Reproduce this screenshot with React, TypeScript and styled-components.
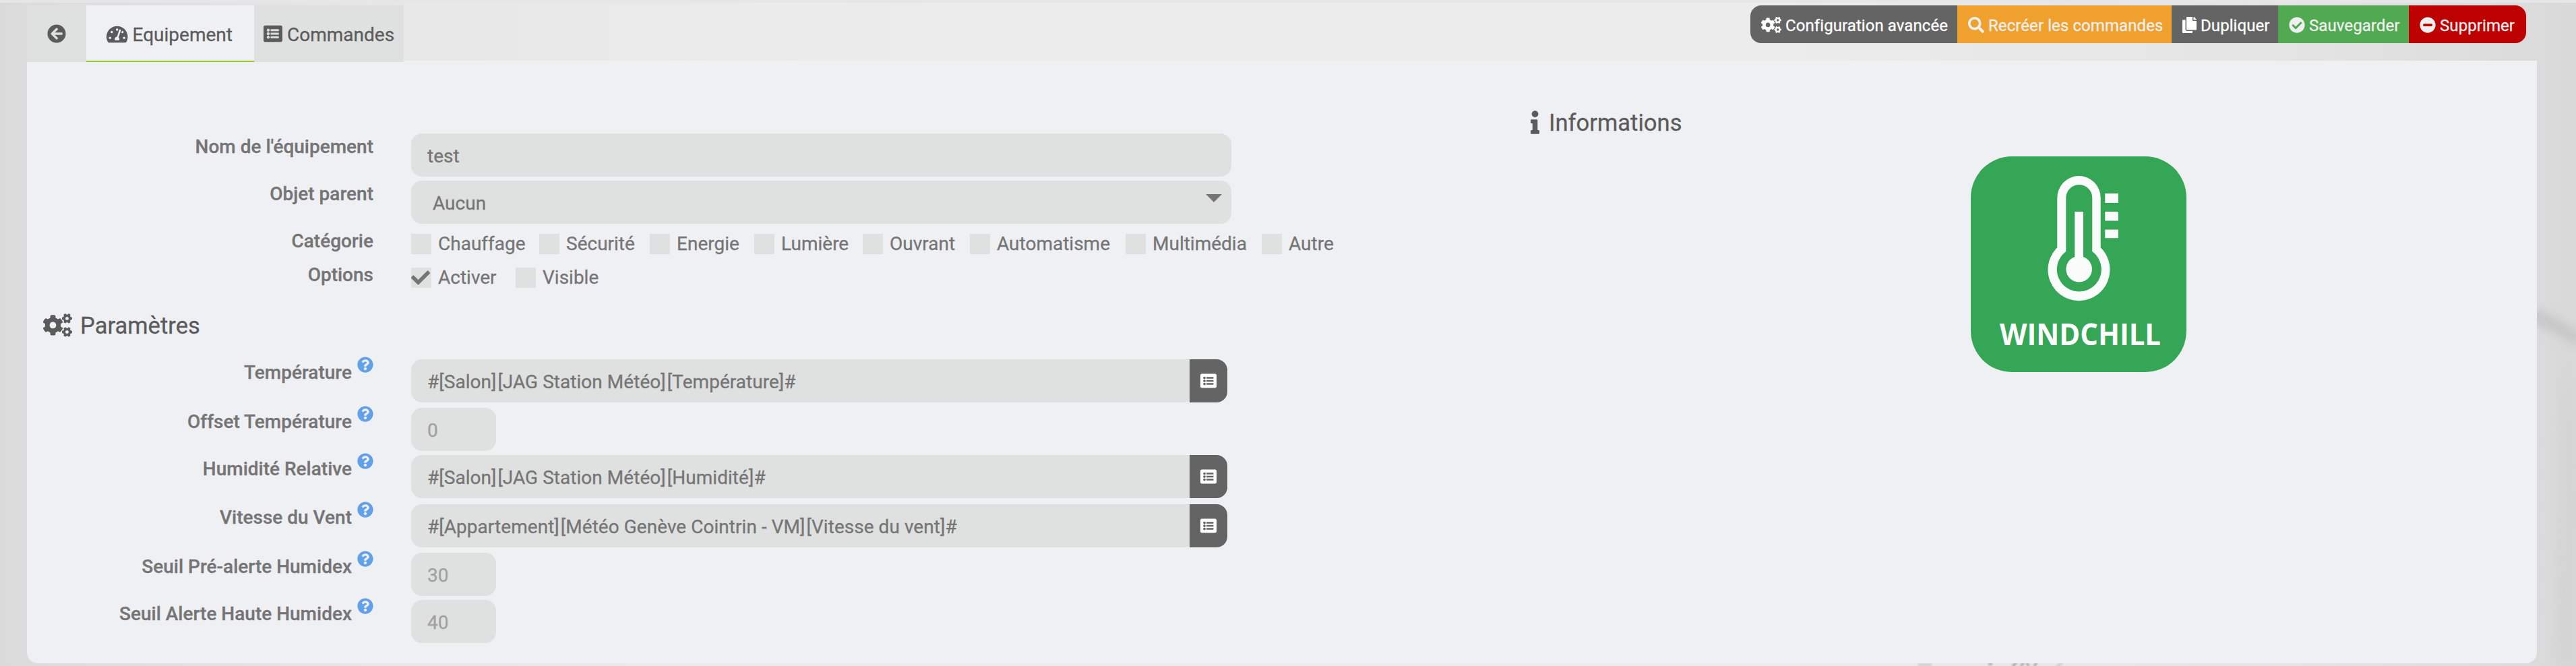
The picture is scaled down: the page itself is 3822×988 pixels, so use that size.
import React from 'react';
import styled, { createGlobalStyle } from 'styled-components';
import {
  FaArrowCircleLeft,
  FaCheck,
  FaCheckCircle,
  FaCogs,
  FaCopy,
  FaInfo,
  FaListAlt,
  FaMinusCircle,
  FaQuestionCircle,
  FaSearch,
  FaTachometerAlt,
} from 'react-icons/fa';

const GlobalStyle = createGlobalStyle`
  * { box-sizing: border-box; }
  body {
    margin: 0;
    font-family: Roboto, "Liberation Sans", sans-serif;
    font-size: 28px;
    line-height: 40px;
    color: #757575;
    -webkit-text-stroke: 0.3px;
  }
`;

const Page = styled.div`
  position: relative;
  height: 988px;
  overflow: hidden;
  border-top: 4px solid #e6e6e9;
  padding: 4px 58px 4px 40px;
  background: linear-gradient(90deg, #dadada 0, #dcdcdc 60px, #e8e8e8 620px, #ececec 1500px, #ececec 2600px, #e4e4e4 3400px, #dcdcdc 3720px, #d9d9d9 3822px);
`;

const Backdrop = styled.svg`
  position: absolute;
  inset: 0;
`;

const TopBar = styled.div`
  position: relative;
  z-index: 1;
  display: flex;
  justify-content: space-between;
  align-items: flex-start;
  height: 82px;
  padding-right: 16px;
`;

const Tabs = styled.div`
  display: flex;
  height: 84px;
`;

const Tab = styled.div<{ $active?: boolean; $width: number; $pad: number }>`
  display: flex;
  width: ${(p) => p.$width}px;
  height: 84px;
  padding: 2px 0 0 ${(p) => p.$pad}px;
  gap: 7px;
  line-height: 84px;
  white-space: nowrap;
  color: #5b5b5b;
  background: ${(p) => (p.$active ? '#eff0f3' : '#dfe1e0')};
  box-shadow: ${(p) => (p.$active ? 'inset 0 -2px 0 #95cb27' : 'none')};
`;

const Glyph = styled.span<{ $w: number; $h: number; $top?: number }>`
  flex: none;
  display: block;
  width: ${(p) => p.$w}px;
  height: ${(p) => p.$h}px;
  margin-top: ${(p) => p.$top ?? 0}px;
  svg {
    display: block;
    width: 100%;
    height: 100%;
  }
`;

const Actions = styled.div`
  display: flex;
  height: 56px;
  border-radius: 16px;
  overflow: hidden;
`;

const Action = styled.div<{ $bg: string; $fg: string; $width: number }>`
  display: flex;
  width: ${(p) => p.$width}px;
  padding: 2px 0 0 16px;
  gap: 6px;
  font-size: 24px;
  letter-spacing: 0.08px;
  line-height: 56px;
  white-space: nowrap;
  color: ${(p) => p.$fg};
  background: ${(p) => p.$bg};
`;

const Panel = styled.div`
  position: relative;
  display: flex;
  height: 894px;
  border-radius: 0 0 16px 16px;
  background: #eff0f3;
`;

const FormColumn = styled.div`
  width: 2207px;
  padding: 108px 0 0 24px;
`;

const InfoColumn = styled.div`
  flex: 1;
  padding: 72px 20px 0 24px;
`;

const Title = styled.div<{ $gap: number }>`
  display: flex;
  align-items: flex-start;
  gap: ${(p) => p.$gap}px;
  height: 40px;
  font-size: 34.6px;
  color: #5b5b5b;
`;

const ParamsTitle = styled(Title)`
  margin: 25px 0 30px;
`;

const LogoHolder = styled.div`
  display: flex;
  justify-content: center;
  padding: 30px 0 0 153px;
`;

const Row = styled.div<{ $h: number }>`
  display: flex;
  height: ${(p) => p.$h}px;
`;

const Label = styled.div<{ $shift?: number }>`
  display: flex;
  justify-content: flex-end;
  gap: 8px;
  width: 490px;
  margin-right: 56px;
  padding-top: ${(p) => p.$shift ?? 0}px;
  font-weight: 500;
  white-space: nowrap;
`;

const Help = styled(Glyph)`
  color: #62a0ea;
`;

const Field = styled.div<{ $width: number; $left?: number; $joined?: boolean; $hint?: boolean }>`
  position: relative;
  width: ${(p) => p.$width}px;
  height: 64px;
  padding: 2px 0 0 ${(p) => p.$left ?? 24}px;
  line-height: 64px;
  white-space: nowrap;
  border-radius: ${(p) => (p.$joined ? '16px 0 0 16px' : '16px')};
  background: #dfe1e0;
  color: ${(p) => (p.$hint ? '#a0a1a1' : '#757575')};
`;

const Segment = styled.span`
  letter-spacing: 0.04px;
  & + & {
    margin-left: 2px;
  }
`;

const Caret = styled.span`
  position: absolute;
  top: 20px;
  right: 14px;
  border: 12px solid transparent;
  border-top-color: #757575;
  border-bottom: 0;
`;

const PickButton = styled.div`
  display: flex;
  justify-content: center;
  width: 56px;
  height: 64px;
  padding-top: 20px;
  border-radius: 0 16px 16px 0;
  background: #646464;
  color: #fff;
`;

const Check = styled.div<{ $width: number }>`
  display: flex;
  gap: 10px;
  width: ${(p) => p.$width}px;
  padding-top: 9px;
  white-space: nowrap;
`;

const Box = styled.span`
  flex: none;
  width: 30px;
  height: 30px;
  background: #dfe1e0;
`;

const CheckText = styled.span`
  line-height: 30px;
  height: 30px;
`;

const categories: [string, number][] = [
  ['Chauffage', 190],
  ['Sécurité', 164],
  ['Energie', 155],
  ['Lumière', 161],
  ['Ouvrant', 159],
  ['Automatisme', 231],
  ['Multimédia', 202],
  ['Autre', 120],
];

type Param = { label: string; value: string[]; height: number; shift: number; picker?: boolean };

const params: Param[] = [
  { label: 'Température', value: ['#[Salon]', '[JAG Station Météo]', '[Température]#'], height: 72, shift: 0, picker: true },
  { label: 'Offset Température', value: ['0'], height: 70, shift: 1 },
  { label: 'Humidité Relative', value: ['#[Salon]', '[JAG Station Météo]', '[Humidité]#'], height: 73, shift: 1, picker: true },
  { label: 'Vitesse du Vent', value: ['#[Appartement]', '[Météo Genève Cointrin - VM]', '[Vitesse du vent]#'], height: 72, shift: 0, picker: true },
  { label: 'Seuil Pré-alerte Humidex', value: ['30'], height: 70, shift: 1 },
  { label: 'Seuil Alerte Haute Humidex', value: ['40'], height: 64, shift: 1 },
];

function Logo() {
  return (
    <svg width="320" height="320" viewBox="0 0 320 320">
      <rect width="320" height="320" rx="61" fill="#35a556" />
      <g fill="#fafcfb">
        <path
          fillRule="evenodd"
          d="M128.3 135.3V61.2A32.2 32.2 0 0 1 192.7 61.2V135.3A46 46 0 1 1 128.3 135.3ZM141.3 141V61.5A19.5 19.5 0 0 1 180.3 61.5V141A33 33 0 1 1 141.3 141Z"
        />
        <path d="M154.3 82H167V149A19.3 19.3 0 1 1 154.3 149Z" />
        <rect x="199.3" y="55" width="19.5" height="14" />
        <rect x="199.3" y="82" width="19.5" height="13.5" />
        <rect x="199.3" y="108.6" width="19.5" height="12.6" />
      </g>
      <text
        x="43"
        y="280"
        fill="#fff"
        fontFamily="'Open Sans', 'Noto Sans', sans-serif"
        fontWeight="700"
        fontSize="45"
        textLength="239"
        lengthAdjust="spacingAndGlyphs"
      >
        WINDCHILL
      </text>
    </svg>
  );
}

function BackdropMarks() {
  return (
    <Backdrop width="3822" height="984" viewBox="0 4 3822 984">
      <defs>
        <filter id="soft" x="-50%" y="-50%" width="200%" height="200%">
          <feGaussianBlur stdDeviation="9" />
        </filter>
        <filter id="fine" x="-20%" y="-100%" width="140%" height="300%">
          <feGaussianBlur stdDeviation="1.4" />
        </filter>
      </defs>
      <path d="M3745 466Q3790 476 3826 506" stroke="#c0c0c0" strokeWidth="16" fill="none" filter="url(#soft)" />
      <path d="M3800 500L3830 640V990H3790Z" fill="#d4d4d4" filter="url(#soft)" />
      <g stroke="#9a9a9a" strokeWidth="3" filter="url(#fine)">
        <path d="M2846 986H2866" stroke="#c6c6c6" />
        <path d="M2950 985H2956" />
        <path d="M2986 988L2992 983M2998 988L3003 983M3010 988L3007 983M3018 988L3022 983" />
        <path d="M3052 988L3060 983" stroke="#c6c6c6" />
      </g>
    </Backdrop>
  );
}

export default function App() {
  return (
    <Page>
      <GlobalStyle />
      <BackdropMarks />
      <TopBar>
        <Tabs>
          <Tab $width={88} $pad={30}>
            <Glyph $w={28} $h={28} $top={26}><FaArrowCircleLeft /></Glyph>
          </Tab>
          <Tab $active $width={249} $pad={30}>
            <Glyph $w={31.5} $h={28} $top={27}><FaTachometerAlt /></Glyph>
            Equipement
          </Tab>
          <Tab $width={222} $pad={14}>
            <Glyph $w={28} $h={28} $top={26}><FaListAlt /></Glyph>
            Commandes
          </Tab>
        </Tabs>
        <Actions>
          <Action $bg="#646464" $fg="#fff" $width={307}>
            <Glyph $w={30} $h={24} $top={15}><FaCogs /></Glyph>
            Configuration avancée
          </Action>
          <Action $bg="#f0a02c" $fg="#f0f0f0" $width={318}>
            <Glyph $w={24} $h={24} $top={15}><FaSearch /></Glyph>
            Recréer les commandes
          </Action>
          <Action $bg="#646464" $fg="#fff" $width={158}>
            <Glyph $w={21} $h={24} $top={15}><FaCopy /></Glyph>
            Dupliquer
          </Action>
          <Action $bg="#51aa51" $fg="#f0f0f0" $width={194}>
            <Glyph $w={24} $h={24} $top={15}><FaCheckCircle /></Glyph>
            Sauvegarder
          </Action>
          <Action $bg="#bd0000" $fg="#f0f0f0" $width={174}>
            <Glyph $w={24} $h={24} $top={15}><FaMinusCircle /></Glyph>
            Supprimer
          </Action>
        </Actions>
      </TopBar>
      <Panel>
        <FormColumn>
          <Row $h={70}>
            <Label>Nom de l'équipement</Label>
            <Field $width={1217}>test</Field>
          </Row>
          <Row $h={70}>
            <Label>Objet parent</Label>
            <Field $width={1217} $left={32}>
              Aucun
              <Caret />
            </Field>
          </Row>
          <Row $h={50}>
            <Label>Catégorie</Label>
            {categories.map(([name, width]) => (
              <Check key={name} $width={width}>
                <Box />
                <CheckText>{name}</CheckText>
              </Check>
            ))}
          </Row>
          <Row $h={50}>
            <Label>Options</Label>
            <Check $width={155}>
              <Box>
                <Glyph $w={28} $h={28} $top={1}><FaCheck /></Glyph>
              </Box>
              <CheckText>Activer</CheckText>
            </Check>
            <Check $width={130}>
              <Box />
              <CheckText>Visible</CheckText>
            </Check>
          </Row>
          <ParamsTitle $gap={12}>
            <Glyph $w={43} $h={35} $top={2}><FaCogs /></Glyph>
            Paramètres
          </ParamsTitle>
          {params.map((p) => (
            <Row key={p.label} $h={p.height}>
              <Label $shift={p.shift}>
                {p.label}
                <Help $w={24} $h={24} $top={-4}><FaQuestionCircle /></Help>
              </Label>
              <Field $width={p.picker ? 1155 : 126} $joined={p.picker} $hint={!p.picker}>
                {p.value.map((part) => (
                  <Segment key={part}>{part}</Segment>
                ))}
              </Field>
              {p.picker && (
                <PickButton>
                  <Glyph $w={24} $h={24}><FaListAlt /></Glyph>
                </PickButton>
              )}
            </Row>
          ))}
        </FormColumn>
        <InfoColumn>
          <Title $gap={14}>
            <Glyph $w={13} $h={35} $top={2}><FaInfo /></Glyph>
            Informations
          </Title>
          <LogoHolder>
            <Logo />
          </LogoHolder>
        </InfoColumn>
      </Panel>
    </Page>
  );
}
